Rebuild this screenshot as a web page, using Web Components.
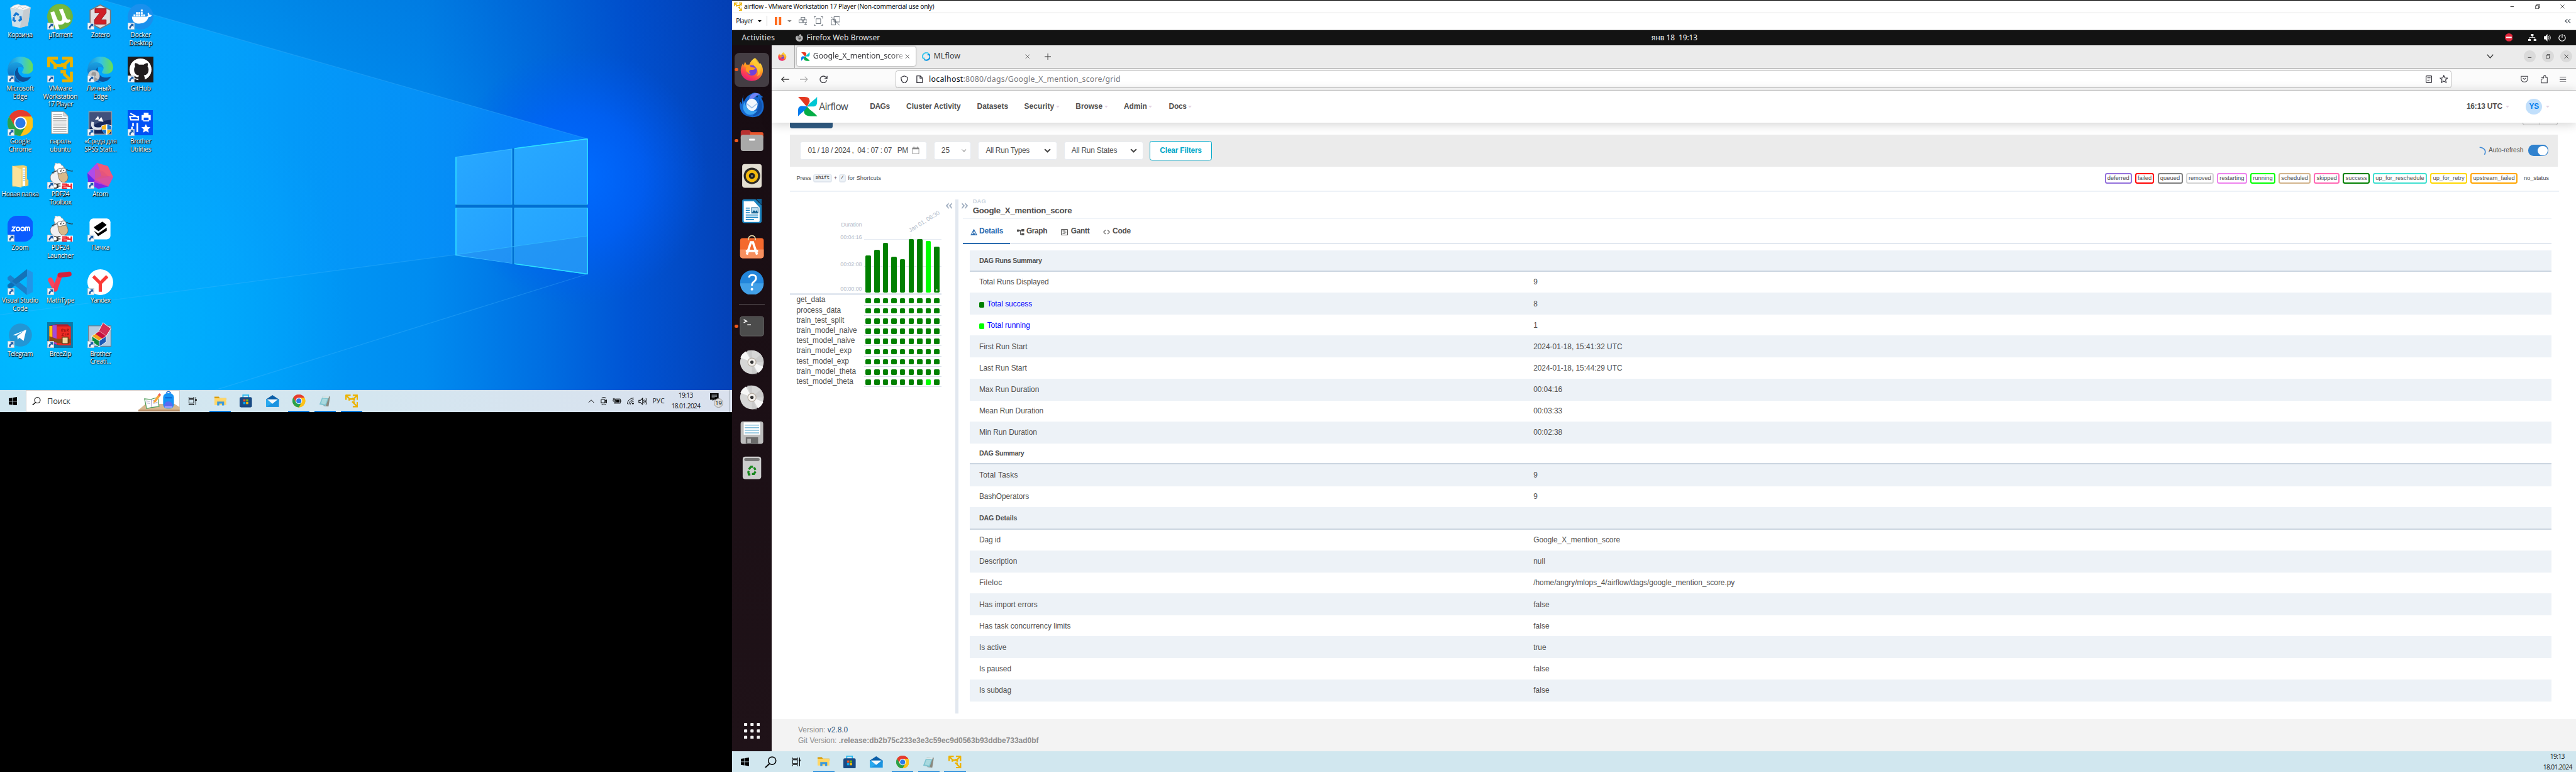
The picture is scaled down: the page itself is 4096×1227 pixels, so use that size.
<!DOCTYPE html>
<html lang="ru">
<head>
<meta charset="utf-8">
<title>Dual monitor desktop</title>
<style>
html,body{margin:0;padding:0;background:#000;overflow:hidden;width:100%;height:100%}
dual-monitor{zoom:.85227}
</style>
</head>
<body>
<dual-monitor></dual-monitor>
<script>
const SEG='"Open Sans","Noto Sans",sans-serif', UB='"Noto Sans","Open Sans",sans-serif', ARI='"Liberation Sans",Arial,sans-serif';
const define=(name,css,html,ready)=>customElements.define(name,class extends HTMLElement{
  constructor(){super();this.attachShadow({mode:'open'});}
  connectedCallback(){
    const t=document.createElement('template');
    t.innerHTML='<style>:host{display:block;box-sizing:border-box}*{box-sizing:border-box}'+css+'</style>'+(typeof html==='function'?html(this):html);
    this.shadowRoot.replaceChildren(t.content.cloneNode(true));
    if(ready)ready(this);
  }
});

/* one-line text that spreads its letters over a given width */
const ctx=document.createElement('canvas').getContext('2d');
customElements.define('ui-text',class extends HTMLElement{
  constructor(){super();this.attachShadow({mode:'open'}).innerHTML='<style>:host{display:block;flex:none;white-space:pre;line-height:1.2}</style><slot></slot>';}
  connectedCallback(){
    const w=+this.getAttribute('w'),t=this.textContent;
    if(!w)return;
    const c=getComputedStyle(this);
    ctx.font=c.fontWeight+' '+c.fontSize+' '+c.fontFamily;
    this.style.letterSpacing=((w-ctx.measureText(t).width)/t.length).toFixed(3)+'px';
    this.style.width=w+'px';
  }
});
const T=(t,w,size,color,bold,fam,extra)=>`<ui-text w="${w}" style="font-family:${(fam||ARI).replace(/"/g,"'")};font-size:${size}px;color:${color||'#51504f'};font-weight:${bold||400};${extra||''}">${t}</ui-text>`;
/* a flex strip: [left, width, content] turned into margins */
const strip=(start,items)=>{let p=start;return items.map(([x,w,h,s])=>{const m=x-p;p=x+w;return `<div style="flex:none;display:flex;align-items:center;margin-left:${m}px;width:${w}px;${s||''}">${h}</div>`;}).join('');};

const svg=(vb,body)=>`<svg viewBox="${vb}" width="100%" height="100%" preserveAspectRatio="none" style="display:block" xmlns="http://www.w3.org/2000/svg">${body}</svg>`;
const edge=`<defs><linearGradient id="ea" x1="0" y1="0" x2="1" y2="0"><stop offset="0" stop-color="#1b8fd6"/><stop offset=".5" stop-color="#33c3e8"/><stop offset="1" stop-color="#6ae04e"/></linearGradient><linearGradient id="eb" x1="0" y1="0" x2="0" y2="1"><stop offset="0" stop-color="#1ba0e0"/><stop offset="1" stop-color="#0a5cb4"/></linearGradient></defs><path d="M0 24C1 9 12 0 24 0c14 0 24 9 24 20 0 9-7 12-12 12-6 0-9-1-9-3s3-3 3-8c0-5-6-10-14-10C8 11 1 17 0 24z" fill="url(#ea)"/><path d="M0 24c2-8 9-13 16-13 8 0 14 5 14 11-4-6-17-3-17 9 0 9 6 15 13 17C10 49 0 37 0 24z" fill="url(#eb)"/><path d="M20 20c-7 3-9 16-1 23 8 7 20 4 25-6-6 3-14 3-19-1-5-4-7-11-5-16z" fill="#0f4f96"/>`;
const vmw=`<g fill="none" stroke="#ecb200" stroke-width="5.5" stroke-linejoin="round"><path d="M2.8 20V2.8H20"/><path d="M28 2.8h17.2V20"/><path d="M45.200 28v17.200H28"/><path d="M4 4l13 13h8M44 4L30 17h-5M44 44L31 32"/></g><path d="M12 14h14v5h-8v4h-6zM26 12h10v11h-6v-4h-4zM25 25h10v10h-5v-4h-5z" fill="#ecb200"/>`;
const chrome=`<circle cx="24" cy="24" r="24" fill="#fbbc05"/><path d="M24 24L3.200 12A24 24 0 0 1 44.800 12z" fill="#ea4335"/><path d="M24 12h20.800A24 24 0 0 0 3.200 12L13.600 30z" fill="#e53c2e"/><path d="M3.200 12A24 24 0 0 0 24 48l10.400-18L24 24 13.600 30z" fill="#2ba24c"/><path d="M24 48a24 24 0 0 0 20.800-36H24l10.400 18z" fill="#fdc21a"/><circle cx="24" cy="24" r="12" fill="#fff"/><circle cx="24" cy="24" r="9.500" fill="#2a7bea"/>`;
const firefox=`<defs><linearGradient id="fa" x1=".8" y1="0" x2=".3" y2="1"><stop offset="0" stop-color="#fff34c"/><stop offset=".45" stop-color="#ff9a20"/><stop offset=".75" stop-color="#ff4150"/><stop offset="1" stop-color="#e21b7c"/></linearGradient></defs><path d="M31 0c3 7 6 9 8 12l3-1c7 9 7 21 0 29-5 6-12 8-18 8C10 48 1 38 1 26c0-6 2-11 5-15l1 5 3-8 3 6h6c2-6 6-11 12-14z" fill="url(#fa)"/><circle cx="24" cy="26" r="11" fill="#7540d8"/><path d="M7 16c7-3 13-1 15 3l10 2c-2 4-6 4-9 4-6 0-5 6-1 9C14 33 9 24 13 20z" fill="#ff9a1e"/><path d="M31 0c9 8 14 18 11 30-1 5-4 7-7 8 4-8 1-15-4-19-5-5-5-12 0-19z" fill="#ffc933" opacity=".75"/>`;
const airflow=`<path d="M0 0h12c8 0 10 4 9.500 9L17 18C12 15 8 7 0 0z" fill="#e43921"/><path d="M35.500 0v9c0 8-4 9-9 9H17C20 12 28 8 35.500 0z" fill="#00c7d4"/><path d="M36 36H24c-8 0-13-3-13-9 0-3 3-7 6-9 3 6 12 10 19 18z" fill="#04ad46"/><path d="M0 36V25c0-7 4-8 8-8l9 1c-2 6-9 10-17 18z" fill="#017cee"/>`;
const sheep=`<path d="M8 34c-5-8 0-16 5-15-1-5 3-8 6-7 0-6 8-9 12-5l5 9 2 14-6 8H14z" fill="#f0f0f2" stroke="#777" stroke-width="1"/><path d="M15 3c-3-2 2-4 4-2 3-2 8 0 7 3 4 0 6 4 2 6L16 14c-4-2-4-8-1-11z" fill="#fff" stroke="#999" stroke-width=".8"/><path d="M20 18c4-3 16-3 18 4 3 9-2 14-8 14-7 0-10-10-10-18z" fill="#d9b98a" stroke="#555" stroke-width=".8"/><circle cx="24" cy="15" r="5" fill="#fff" stroke="#444" stroke-width=".8"/><circle cx="31" cy="14" r="4.500" fill="#fff" stroke="#444" stroke-width=".8"/><circle cx="25" cy="15" r="1"/><circle cx="31" cy="14" r="1"/><path d="M36 12q6 4 12 3M18 15q-6 1-9 4" stroke="#333" stroke-width="1.300" fill="none"/><rect y="37" width="48" height="11" fill="#fff"/><path d="M13 39h3q3 0 3 4t-3 4h-3M25 39h-5v8M20 43h5" stroke="#333" stroke-width="1.800" fill="none"/><path d="M28 39.500h8V43h-7v4h8M39 39v4.500h7M45 38.500V48" stroke="#ee1c25" stroke-width="2.600" fill="none"/>`;
const disc=`<circle cx="24" cy="24" r="23" fill="#d6d6d6"/><path d="M24 24L1.500 15A24 24 0 0 1 12 3z" fill="#f6f6f6"/><path d="M24 24l22 9a24 24 0 0 1-10 12z" fill="#f6f6f6"/><path d="M24 24V1h-9zM24 24h23a23 23 0 0 0-6-15zM24 24v23h10z" fill="#c4c4c4" opacity=".7"/><circle cx="24" cy="24" r="8" fill="#f4f1ee" stroke="#b5ada2" stroke-width="1.500"/><circle cx="24" cy="24" r="3.200" fill="#333"/>`;
const ICONS={
 edge:['0 0 48 48',edge], vmware:['0 0 48 48',vmw], chrome:['0 0 48 48',chrome], firefox:['0 0 48 48',firefox], airflow:['0 0 36 36',airflow], sheep:['0 0 48 48',sheep], disc:['0 0 48 48',disc],
 edgeme:['0 0 48 48',edge+'<circle cx="12" cy="36" r="11" fill="#c9c9c9"/><circle cx="12" cy="33" r="4.500" fill="#9a9a9a"/><path d="M4 43q8-9 16 0-8 6-16 0z" fill="#9a9a9a"/>'],
 ffgray:['0 0 48 48','<path d="M31 0c3 7 6 9 8 12l3-1c7 9 7 21 0 29-5 6-12 8-18 8C10 48 1 38 1 26c0-6 2-11 5-15l1 5 3-8 3 6h6c2-6 6-11 12-14z" fill="#b8b8b8"/><circle cx="25" cy="26" r="10" fill="#555"/><path d="M7 16c7-3 13-1 15 3l10 2c-2 4-6 4-9 4-6 0-5 6-1 9C14 33 9 24 13 20z" fill="#8f8f8f"/>'],
 bin:['0 0 48 48','<path d="M5 8l38-1-5 34-15 4-14-3z" fill="#dfe3e6" opacity=".93"/><path d="M30 12l13-5-5 34-15 4z" fill="#c6ccd1"/><path d="M5 8l7-5 8-2 5 2 9 0 9 4-13 5z" fill="#f7f7f7" stroke="#c5cacd" stroke-width=".8"/><path d="M12 6l6 3 4-5 6 5 7-3" fill="none" stroke="#b9bfc4"/><g fill="none" stroke="#1677d2" stroke-width="4"><path d="M12 23l4-5 5 3M24 23l1 6-4 3M15 33l-4-3 1-5"/></g>'],
 utorrent:['0 0 48 48','<circle cx="24" cy="24" r="24" fill="#6cb33e"/><circle cx="24" cy="20" r="19" fill="#8cc63f" opacity=".35"/><path d="M6 16l7-2 6 15q3 5 8 2 2-2 1-6l-6-14 7-2 7 18q3 4 6 2l2 3q-6 6-11 2-2 5-9 5-3 0-4-1l3 9-7 1z" fill="#fff"/>'],
 zotero:['0 0 48 48','<path d="M24 2l19 10v24L24 46 5 36V12z" fill="#e0dfe0" stroke="#7d7678" stroke-width="2"/><path d="M14 9h21v8L25 30h10v8H13v-8l10-13h-9z" fill="#cf2027" stroke="#8c1217"/>'],
 docker:['0 0 48 48','<circle cx="24" cy="24" r="24" fill="#1a90ed"/><path d="M8 24h27q2 0 3-2-2-3 0-6 3 2 3 5 3-1 4 1-2 3-6 3-4 12-17 12Q8 37 8 24z" fill="#fff"/><g fill="#fff"><path d="M11 20h3.500v3.500H11zM15.500 20H19v3.500h-3.500zM20 20h3.500v3.500H20zM24.500 20H28v3.500h-3.500zM29 20h3.500v3.500H29zM15.500 15.500H19V19h-3.500zM20 15.500h3.500V19H20zM24.500 15.500H28V19h-3.500zM24.500 11H28v3.500h-3.500z"/></g>'],
 github:['0 0 48 48','<path fill="#201c1d" d="M0 0h48v48H0z"/><circle cx="24" cy="24" r="20.500" fill="#fff"/><path d="M20 48v-7c-6 1-8-3-10-5 4-1 5 3 10 2l1-3c-6-1-9-4-9-11 0-2 1-4 2-6-1-2-1-4 0-6 3 0 5 1 7 3h9c2-2 4-3 7-3 1 2 1 4 0 6 1 2 2 4 2 6 0 7-3 10-9 11 1 2 2 3 2 6v7z" fill="#201c1d"/>'],
 txt:['0 0 48 48','<path d="M8 3h23l8 8v33H8z" fill="#fbfbfb" stroke="#909090"/><path d="M31 3v8h8z" fill="#d8d8d8" stroke="#909090"/><path d="M11 8h17M11 12h17M11 16h25M11 20h25M11 24h25M11 28h25M11 32h25M11 36h25M11 40h25" stroke="#8a8a8a" stroke-width="1.200"/>'],
 spss:['0 0 48 48','<path d="M3 3h42v42H3z" fill="#17285c" stroke="#8e98a8" stroke-width="2"/><path d="M4 4h40v14Q20 20 4 34z" fill="#5c6b8f" opacity=".6"/><path d="M10 22Q6 38 26 34" fill="none" stroke="#dfe4ee" stroke-width="5"/><path d="M14 18l6-7 2 7zM20 20l6-7 4 9z" fill="#fff"/><path d="M26 29l10-3 10 3q1 12-10 17-11-5-10-17z" fill="#fff"/><path d="M27 30l8-3v9h-8zM37 37h8q-2 5-8 8z" fill="#f9b81c"/><path d="M37 27l8 3v6h-8zM27 37h8v8q-6-3-8-8z" fill="#1678d3"/>'],
 brother:['0 0 48 48','<path fill="#0052f5" d="M0 0h47v47H0z"/><g fill="none" stroke="#fff" stroke-width="2.500"><path d="M4 12h16v6H6zM5 6l15 8"/><path d="M10 24v6M8 31v11M18 24v9M18 33v8" stroke-width="3"/></g><path d="M30 5h9v4h4v10h-3v2H29v-2h-3V9h4zM34 26l2.500 5.500 6 .5-4.500 4 1.500 6-5.500-3-5.500 3 1.500-6-4.500-4 6-.5z" fill="#fff"/><path d="M30 14h9v5h-9z" fill="#0052f5"/>'],
 folder:['0 0 48 48','<path d="M9 6l20-2 6 2v36l-6 2H9z" fill="#f2cf6a"/><path d="M28 9h8v34h-8z" fill="#fff"/><path d="M29 13h6M29 17h6M29 21h6M29 25h6M29 29h6M29 33h6" stroke="#4b9fd8"/><path d="M9 5l17 7v34L9 42z" fill="#fbe29a"/><path d="M36 6v24l3 2v10l-6 2V8z" fill="#eec75c"/>'],
 atom:['0 0 48 48','<path d="M18 0l20 6 10 20-9 18-19 4L2 38 0 19z" fill="#c33bd0"/><path d="M18 0l20 6 10 20-22-2z" fill="#ee5b78"/><path d="M18 0L0 19l14 12 12-7z" fill="#b04bea"/><path d="M14 31l12-7 22 2-9 18z" fill="#d8519f"/><path d="M0 19l14 17 25 8-19 4L2 38z" fill="#7a2be6"/><path d="M0 19l14 14-12 5z" fill="#5b2bf0"/><path d="M14 10l16 6 10 10-26 5z" fill="#e0517f" opacity=".6"/>'],
 zoom:['0 0 48 48','<rect width="48" height="48" rx="17" fill="#0b5cff"/><g fill="none" stroke="#fff" stroke-width="2"><path d="M8 21h6l-6 7h6"/><circle cx="19.500" cy="24.500" r="3.200"/><circle cx="28" cy="24.500" r="3.200"/><path d="M33 28.500V23q0-2 2-2t2 2v5.500M37 23q0-2 2-2t2 2v5.500"/></g>'],
 pachka:['0 0 48 48','<rect x="4" y="5" width="39" height="39" rx="7" fill="#fff"/><path d="M12 21l16-10 8 6-15 12q-7-3-9-8zM12 28l8 5 16-11v6L20 38z" fill="#000"/><path d="M13 24l8 6 14-11" fill="none" stroke="#fff" stroke-width="1.500"/>'],
 vscode:['0 0 48 48','<path d="M36 0l12 6v36l-12 6z" fill="#2196e8"/><path d="M36 0v13L5 37l-5-4v-4z" fill="#0a6fb8"/><path d="M36 48V35L5 11l-5 4v4z" fill="#1a80cc"/><path d="M36 0v13l-20 15-8-6z" fill="#1472b8"/>'],
 mathtype:['0 0 48 48','<g fill="none" stroke-linecap="round" stroke-width="9"><path d="M6 20l9 17" stroke="#f9475e"/><path d="M15 37l9-26" stroke="#f23e53"/><path d="M24 11l17-2" stroke="#d4203c"/></g>'],
 yandex:['0 0 48 48','<circle cx="24" cy="24" r="24" fill="#fff"/><path d="M11 13l13 13 13-13M24 26v16" stroke="#fb3a36" stroke-width="6" fill="none"/>'],
 telegram:['0 0 48 48','<circle cx="24" cy="24" r="21.500" fill="#2396d4"/><path d="M10 24l25-10-5 21-8-6-3 4-1-7 13-10-16 9z" fill="#fff"/>'],
 breezip:['0 0 48 48','<path fill="#0b78a8" d="M0 0h48v48H0z"/><path d="M4 7l12-3h22l6 5v34H22L4 38z" fill="#b31c2c"/><path d="M4 7h6v31l-6-2z" fill="#ffc20e"/><path d="M10 6h8v36l-8-3z" fill="#a24bd8"/><path d="M18 8h26v35H22l-4-2z" fill="#ee2b24"/><path d="M4 26l14 5h26v8H20L4 35z" fill="#8a4a16"/><path d="M28 28h11v12H28z" fill="#f2d9a0" stroke="#5b3310" stroke-width="1.500"/><path d="M27 18v-5h3v2h-3l3 3M32 18l1-5 2 5M37 18v-5h3v2h-3l3 3M27 21h4l-4 4h4M34 21v4M37 25v-4h3v2h-3" stroke="#8e1010" fill="none"/>'],
 creative:['0 0 48 48','<path d="M2 7h42v38H2z" fill="#b4cbe0" stroke="#6a7f92" stroke-width="1.500"/><path d="M29 1l15 11-9 14-14-9z" fill="#d22f56" stroke="#fff"/><path d="M8 26l14-9 13 9-14 9z" fill="#f6a31c" stroke="#fff"/><path d="M22 17l13 9-7 5-13-9z" fill="#c8103e"/><path d="M8 26l14 9v11L9 37z" fill="#0a8a3d" stroke="#fff"/><path d="M22 35l13-9v11L22 46z" fill="#1b5bb8" stroke="#fff"/>'],
 arrow:['0 0 13 13','<path d="M.5.500h12v12H.5z" fill="#f2f5f8" stroke="#bcc6cf"/><path d="M5 2h6v6L9 6Q5 8 6 11H3Q2 6 7 4z" fill="#2160a8"/>'],
 start:['0 0 16 16','<path d="M0 2.300L6.500 1.400V7.500H0zM7.500 1.200L16 0v7.500H7.500zM0 8.500h6.500v6.100L0 13.700zM7.500 8.500H16V16l-8.500-1.200z"/>'],
 search:['0 0 16 16','<circle cx="10" cy="6" r="5.200" fill="none" stroke="currentColor" stroke-width="1.300"/><path d="M6.500 10L.5 15.500" stroke="currentColor" stroke-width="1.600"/>'],
 taskview:['0 0 16 16','<path d="M.5 0v2.500h9V0M.5 16v-2.500h9V16M.5 4.500h9v7h-9zM13.500 0v16" fill="none" stroke="#000" stroke-width="1.200"/><path d="M12 4h3v3h-3z"/>'],
 wfolder:['0 0 22 22','<path d="M0 2h8l2 3h12v4H0z" fill="#d99a00"/><path d="M0 5h22v14H0z" fill="#ffd667"/><path d="M5 20v-8h13v8h-4v-4H9v4z" fill="#3b99dc"/>'],
 store:['0 0 22 24','<path d="M6 7V1h10v6" fill="none" stroke="#20b7ef" stroke-width="2"/><rect y="5" width="22" height="19" rx="2.500" fill="#184a84"/><path d="M6.500 9h4v4h-4z" fill="#f35325"/><path d="M11.500 9h4v4h-4z" fill="#81bc06"/><path d="M6.500 14h4v4h-4z" fill="#05a6f0"/><path d="M11.500 14h4v4h-4z" fill="#ffba08"/>'],
 mail:['0 0 24 22','<path d="M12 0l12 8v4H0V8z" fill="#0b5fa8"/><path d="M0 8h24v14H0z" fill="#2aa9ee"/><path d="M24 8v14H0z" fill="#1b93e0"/><path d="M2 8h20l-10 8z" fill="#f4f8fb"/>'],
 notepad:['0 0 24 24','<path d="M8 2l13 1-3 20-9-1z" fill="#8a8a80"/><path d="M7 2l12 1-6 19L1 19z" fill="#7fc4d0"/><path d="M7 2l12 1-1 3L6 5z" fill="#dfe8ea"/><path d="M7 7l9 1-4 11-8-2z" fill="#b9e2e6" opacity=".7"/>'],
 desk:['0 0 80 40','<path d="M0 38L14 26h56l10 6v8H0z" fill="#d7b78f"/><path d="M0 37h80v3H0z" fill="#b98f68"/><path d="M12 16l12 1 14-4 2 18-14 2-10 2z" fill="#fff" stroke="#4c9a57" stroke-width="1.500"/><path d="M25 17l1 15M15 20l7 1M15 24l8 1M28 20l8-2M29 25l8-2" stroke="#a9a3c8" stroke-width="1.500"/><path d="M30 20l9-13 4 3-9 12-5 2z" fill="#f9a63a"/><path d="M38 8l3-3 3 3-2 3z" fill="#ef5b5b"/><rect x="48" y="5" width="21" height="30" rx="8" fill="#1593f5"/><path d="M54 5q4-7 9 0" fill="none" stroke="#0d60d8" stroke-width="2"/><path d="M52 14h13" stroke="#0b55c8" stroke-width="2"/><path d="M50 31q0-10 8-10t9 10q-8 5-17 0z" fill="#5a6bf0"/><path d="M51 32h15" stroke="#c9b6ff" stroke-width="2"/>'],
 up:['0 0 14 8','<path d="M1 7l6-6 6 6" fill="none" stroke="#000" stroke-width="1.300"/>'],
 down:['0 0 14 8','<path d="M1 1l6 6 6-6" fill="none" stroke="currentColor" stroke-width="1.600"/>'],
 downb:['0 0 14 9','<path d="M1.500 1.500L7 7l5.500-5.500" fill="none" stroke="currentColor" stroke-width="2.600"/>'],
 cam:['0 0 14 16','<path d="M2 2q4-2 8 0M2 14q4 2 8 0M1 5h7v6H1zM8 7.500l3-2v5l-3-2" fill="none" stroke="#000" stroke-width="1.200"/>'],
 batt:['0 0 16 12','<path d="M5 2.500h9.500v8H5zM1.500 1v3M4 1v3M1 4.500h4v2q-2 2-4 0zM3 8v2.500h2" fill="none" stroke="#000"/><path d="M6.500 4h6.500v5H6.500z"/><path d="M15 5h1v3h-1z"/>'],
 wifi:['0 0 13 13','<path d="M.5 12A11.500 11.500 0 0 1 12.500.8M3.500 12.500A9 9 0 0 1 12.500 4M6.500 12.500A6 6 0 0 1 12.500 7" fill="none" stroke="#000" stroke-width="1.100"/><circle cx="11" cy="11" r="1.600"/>'],
 snd:['0 0 17 14','<path d="M1 5h3l4-4v12l-4-4H1z" fill="none" stroke="#000" stroke-width="1.200"/><path d="M10 4.500q2 2.500 0 5M12 3q3 4 0 8M14 1q4.500 6 0 12" fill="none" stroke="#000" stroke-width="1.100"/>'],
 note:['0 0 16 15','<path d="M0 0h16v12H7l-2 3v-3H0z"/><path d="M3 3.500h10M3 6h10M3 8.500h6" stroke="#dbe3ee"/>'],
 tri:['0 0 8 5','<path d="M0 0h8L4 5z" fill="currentColor"/>'],
 pause:['0 0 12 16','<path d="M0 0h4.500v16H0zM7.500 0H12v16H7.500z" fill="#ff6a1b"/>'],
 cad:['0 0 16 16','<path d="M4.500.500h7v5h-7zM.5 5.500h7v5h-7zM8.500 5.500h7v5h-7zM13 10v5M10.500 13l2.500 2.500 2.500-2.500" fill="none" stroke="#4c5660"/>'],
 full:['0 0 18 18','<path d="M.5 4V.5H4M14 .5h3.500V4M17.500 14v3.500H14M4 17.500H.5V14M4.500 4.500h9v9h-9z" fill="none" stroke="#4c5660"/>'],
 unity:['0 0 17 17','<path d="M6 .5h10.500v10H6zM1 6h8v10H1zM1 1l15.500 16" fill="none" stroke="#4c5660"/>'],
 min:['0 0 10 10','<path d="M1 5h8" stroke="currentColor" stroke-width="1.200"/>'],
 minlow:['0 0 10 10','<path d="M1 8h8" stroke="currentColor" stroke-width="1.200"/>'],
 rest:['0 0 10 10','<path d="M1 2.500h6.500v6.500H1zM3 2.500v-2h6.500v6.500h-2" fill="none" stroke="currentColor"/>'],
 x:['0 0 10 10','<path d="M.8.800l8.400 8.400M9.200.800L.8 9.200" stroke="currentColor" stroke-width="1.100"/>'],
 plus:['0 0 12 12','<path d="M6 0v12M0 6h12" stroke="currentColor" stroke-width="1.300"/>'],
 dleft:['0 0 14 8','<path d="M6.500.500L2 4l4.500 3.500M12 .5L7.500 4 12 7.500" fill="none" stroke="#3c4650" stroke-width="1.200"/>'],
 dnd:['0 0 16 16','<circle cx="8" cy="8" r="8" fill="#e2263b"/><path d="M2.500 6.800h11v2.600h-11z" fill="#fff"/>'],
 net:['0 0 16 14','<path d="M5.500 0h5v4h-5zM0 10h5v4H0zM11 10h5v4h-5z" fill="#fff"/><path d="M8 4v3M2.500 10V7h11v3" fill="none" stroke="#fff"/>'],
 vol:['0 0 15 14','<path d="M0 4h3l4-4v14l-4-4H0z" fill="#fff"/><path d="M9 4q2 3 0 6M11 2q4 5 0 10" fill="none" stroke="#ddd" stroke-width="1.200"/>'],
 power:['0 0 14 14','<path d="M4 2a6 6 0 1 0 6 0M7 0v7" fill="none" stroke="#fff" stroke-width="1.400"/>'],
 mlflow:['0 0 16 16','<path d="M8 1a7 7 0 0 0-6 10.500M2 11.500l-1-4M2 12l3.500-1" stroke="#43c9ed" stroke-width="2.400" fill="none"/><path d="M8 15a7 7 0 0 0 6-10.500M14 4.500l1 4M14 4l-3.500 1M4 13.500q2 1.500 4 1.500" stroke="#0194e2" stroke-width="2.400" fill="none"/><path d="M8 1q3 0 5 2" stroke="#43c9ed" stroke-width="2.400" fill="none"/>'],
 back:['0 0 15 12','<path d="M15 6H1M6 1L1 6l5 5" fill="none" stroke="currentColor" stroke-width="1.500"/>'],
 fwd:['0 0 15 12','<path d="M0 6h14M9 1l5 5-5 5" fill="none" stroke="currentColor" stroke-width="1.300"/>'],
 reload:['0 0 15 15','<path d="M13.500 8.500a6.200 6.200 0 1 1-1.500-5.300L14 5.500M14.200 1v4.700H9.500" fill="none" stroke="#3a3a40" stroke-width="1.500"/>'],
 shield:['0 0 14 15','<path d="M7 .8l6 2.500c.3 5-1 9-6 11-5-2-6.300-6-6-11z" fill="none" stroke="#2b2a33" stroke-width="1.400"/>'],
 page:['0 0 12 14','<path d="M1 .7h6.500L11.300 4.500v8.800H1zM7 1v4h4" fill="none" stroke="#2b2a33" stroke-width="1.400"/>'],
 reader:['0 0 12 14','<rect x=".7" y=".7" width="10.600" height="12.600" rx="1.500" fill="none" stroke="#2b2a33" stroke-width="1.400"/><path d="M3 4h6M3 6.500h6M3 9h4" stroke="#2b2a33"/>'],
 star:['0 0 16 16','<path d="M8 1l2 4.500 5 .5-3.700 3.300 1.100 5L8 11.700l-4.400 2.600 1.100-5L1 6l5-.5z" fill="none" stroke="#2b2a33" stroke-width="1.300"/>'],
 pocket:['0 0 15 14','<path d="M1 1.500h13V6q0 7-6.500 7T1 6zM4.500 5l3 3 3-3" fill="none" stroke="#3a3a40" stroke-width="1.300"/>'],
 ext:['0 0 14 16','<path d="M1 8h2q2 0 2-1.500T3.500 5H1M1 8v7h12V5h-3V3q0-2-2-2T6 3v2H3.500" fill="none" stroke="#3a3a40" stroke-width="1.300"/>'],
 menu:['0 0 13 11','<path d="M0 .7h13M0 5.500h13M0 10.300h13" stroke="#3a3a40" stroke-width="1.300"/>'],
 cal:['0 0 14 14','<path d="M1 2.500h12v11H1z" fill="none" stroke="#888"/><path d="M1 2h12v3H1zM3 0h1.500v3H3zM9.500 0H11v3H9.500z" fill="#888"/>'],
 spin:['0 0 16 16','<path d="M2 1.500q6 0 9.500 4.500 2.500 4-.5 9" fill="none" stroke="#3e8ad6" stroke-width="1.900"/>'],
 cl:['0 0 13 12','<path d="M6.500 0L1 6l5.500 6V9L4 6l2.500-3zM12.500 0L7 6l5.500 6V9L10 6l2.500-3z" fill="#a0aec0"/>'],
 cr:['0 0 13 12','<path d="M.5 0L6 6 .5 12V9L3 6 .5 3zM6.500 0L12 6l-5.500 6V9L9 6 6.500 3z" fill="#a0aec0"/>'],
 details:['0 0 13 12','<path d="M6.500 1L12 11.300H1zM6.500 1v10M3 11l3.500-3L10 11" fill="none" stroke="#2b6cb0" stroke-width="1.300"/>'],
 graph:['0 0 15 12','<path d="M0 1h5v4H0zM9 0h5.500v4.500H9zM9 7.500h5.500V12H9z" fill="#51504f"/><path d="M5 3h4M7 3v7h2" fill="none" stroke="#51504f" stroke-width="1.300"/>'],
 gantt:['0 0 13 12','<rect x=".7" y=".7" width="11.600" height="10.600" rx="1" fill="none" stroke="#51504f" stroke-width="1.300"/><path d="M3 3.500h5M5 6h5M3 8.500h5" stroke="#51504f" stroke-width="1.200"/>'],
 code:['0 0 14 9','<path d="M5 .8L1 4.500 5 8.200M9 .8l4 3.700L9 8.200" fill="none" stroke="#51504f" stroke-width="1.300"/>'],
 tbird:['0 0 48 48','<path d="M9 5Q5 10 8 18 14 6 22 3q8-6 17 1l7 5-4 1q6 9 5 20-3 18-22 18Q1 47 0 24q0-3 2-6 1 3 3 5Q3 12 9 5z" fill="#1668cf"/><path d="M20 8Q25-1 38 2l3 2q-6-1-10 4-5 6-13 6z" fill="#7183f5"/><circle cx="34" cy="8" r="1.500" fill="#062b55"/><path d="M38 12q9 10 4 24-6 9-17 10 14-10 13-34z" fill="#1153ae"/><ellipse cx="24" cy="24" rx="11" ry="12" fill="#f1f6fd"/><path d="M13 21l11 9 11-9" fill="none" stroke="#9fc2ea" stroke-width="2"/><path d="M10 18Q2 32 14 42q12 5 21-7-14 4-21-5-3-5-4-12z" fill="#3ca4f4"/>'],
 files:['0 0 48 48','<path d="M1 8q0-4 4-4h14l4 4h21q3 0 3 3v10H1z" fill="#b83030"/><path d="M20 8h24q3 0 3 3v8H20z" fill="#e8562a"/><rect x="1" y="13" width="46" height="33" rx="5" fill="#a9a9a9"/><rect x="18" y="21" width="12" height="4" rx="1.500" fill="#fff"/>'],
 rhythm:['0 0 48 48','<rect x="5" y="1" width="38" height="46" rx="5" fill="#e4dfd3"/><circle cx="24" cy="24" r="16" fill="#2d2a26"/><circle cx="24" cy="24" r="12" fill="#f2b90f"/><circle cx="24" cy="24" r="6" fill="#222"/><circle cx="24" cy="24" r="2" fill="#777"/>'],
 writer:['0 0 48 48','<path d="M5 5q0-4 4-4h22l12 12v30q0 4-4 4H9q-4 0-4-4z" fill="#1c84c0"/><path d="M8 5h20l11 12v26q0 2-2 2H10q-2 0-2-2z" fill="#fff"/><path d="M32 0h11v12z" fill="#0f5f94"/><path d="M12 18h8M12 22.500h8M12 27h8M12 31.500h24M12 36h24M12 40.500h16" stroke="#1583c3" stroke-width="2"/><path d="M23 17h13v11H23z" fill="#bfe0f3" stroke="#0e5c8c"/><path d="M24 27l4-5 3 3 2-3 3 5z" fill="#0e5c8c"/>'],
 soft:['0 0 48 48','<rect x="1" y="8" width="46" height="39" rx="5" fill="#f4692d"/><path d="M1 30h46v12q0 5-5 5H6q-5 0-5-5z" fill="#f79060"/><path d="M17 12q0-9 7-9t7 9" fill="none" stroke="#e9d9a8" stroke-width="2"/><path d="M14 40l8-24h4l8 24M12 33h24" fill="none" stroke="#fff" stroke-width="4.500"/>'],
 help:['0 0 48 48','<circle cx="24" cy="24" r="23" fill="#2386dc"/><path d="M1 26a23 23 0 0 0 46 0z" fill="#42a0e8"/><path d="M18 15q1-5 7-5 7 0 7 6 0 4-4 7-4 2-4 8" fill="none" stroke="#fff" stroke-width="3.500"/><circle cx="24" cy="37.500" r="2.500" fill="#fff"/>'],
 term:['0 0 48 48','<rect x="1" y="5" width="46" height="38" rx="5" fill="#4c4c4c" stroke="#6b6b6b"/><path d="M8 11l6 3-6 3M15 21h7" fill="none" stroke="#fff" stroke-width="1.800"/>'],
 floppy:['0 0 48 48','<rect x="2" y="2" width="44" height="44" rx="5" fill="#bdbdbd"/><path d="M8 4h32v24H8z" fill="#fff"/><path d="M10 9.500h28M10 14.500h28M10 19.500h28M10 24.500h28" stroke="#0f7fb5"/><path d="M12 33h24v13H12z" fill="#6a6a6a"/><path d="M15 36h7v8h-7z" fill="#b5b5b5"/>'],
 trash:['0 0 48 48','<rect x="6" y="2" width="36" height="44" rx="5" fill="#cdcdcd"/><rect x="9" y="5" width="30" height="6" rx="3" fill="#777"/><g fill="none" stroke="#17881c" stroke-width="4"><path d="M18 27l4-5h4M28 23l3 5M31 31l-3 5h-4M21 37h-3l-1-5 1-2"/></g>'],
 grid9:['0 0 30 30','<g fill="#f3f1f2"><rect width="6" height="6" rx="1.500"/><rect x="12" width="6" height="6" rx="1.500"/><rect x="24" width="6" height="6" rx="1.500"/><rect y="12" width="6" height="6" rx="1.500"/><rect x="12" y="12" width="6" height="6" rx="1.500"/><rect x="24" y="12" width="6" height="6" rx="1.500"/><rect y="24" width="6" height="6" rx="1.500"/><rect x="12" y="24" width="6" height="6" rx="1.500"/><rect x="24" y="24" width="6" height="6" rx="1.500"/></g>']
};
customElements.define('ui-icon',class extends HTMLElement{
  constructor(){super();this.attachShadow({mode:'open'});}
  connectedCallback(){
    const i=ICONS[this.getAttribute('name')],w=this.getAttribute('w'),h=this.getAttribute('h')||w;
    this.shadowRoot.innerHTML=`<style>:host{display:block;flex:none;width:${w}px;height:${h}px}</style>`+svg(i[0],i[1]);
  }
});
const I=(n,w,h,c)=>`<ui-icon name="${n}" w="${w}" h="${h||w}" style="color:${c||'#000'}"></ui-icon>`;

/* ---------- left monitor ---------- */
define('desktop-shortcut',`:host{width:75px;height:99px;padding-top:7px;display:flex;flex-direction:column;align-items:center}
.pic{position:relative;width:48px;height:48px;margin-bottom:3px}.pic .ov{position:absolute;left:0;bottom:0}
ui-text{text-shadow:1px 1px 1px #000,0 1px 2px #000c;line-height:15px}`,
 el=>`<div class="pic">${I(el.getAttribute('icon'),48)}${el.hasAttribute('plain')?'':'<div class="ov">'+I('arrow',13)+'</div>'}</div>`+
 el.getAttribute('label').split('|').map(s=>{const[t,w]=s.split('~');return T(t,w,12,'#fff',400,SEG,'line-height:15px;');}).join(''));
const S=(icon,label,plain)=>icon?`<desktop-shortcut icon="${icon}" label="${label}"${plain?' plain':''}></desktop-shortcut>`:'<span></span>';
const wallpaper=svg('0 0 1366 768',`<defs>
<linearGradient id="a" x1="0" y1="0" x2="1" y2="0"><stop offset="0" stop-color="#00aaff"/><stop offset=".3" stop-color="#00a0fa"/><stop offset=".58" stop-color="#008cf0"/><stop offset=".74" stop-color="#006fe2"/><stop offset=".86" stop-color="#0054d4"/><stop offset="1" stop-color="#0442b8"/></linearGradient>
<radialGradient id="b" gradientUnits="userSpaceOnUse" cx="1080" cy="330" r="240"><stop offset="0" stop-color="#006cff"/><stop offset=".5" stop-color="#0062ff" stop-opacity=".65"/><stop offset="1" stop-color="#0058f0" stop-opacity="0"/></radialGradient>
<radialGradient id="c" gradientUnits="userSpaceOnUse" cx="100" cy="600" r="560"><stop offset="0" stop-color="#00bcff"/><stop offset="1" stop-color="#00b0ff" stop-opacity="0"/></radialGradient>
<linearGradient id="d" x1="0" y1="0" x2="1" y2="0"><stop offset="0" stop-color="#18b4ff" stop-opacity="0"/><stop offset=".5" stop-color="#0a9cff" stop-opacity=".3"/><stop offset="1" stop-color="#0a8cff" stop-opacity=".75"/></linearGradient>
<linearGradient id="e" x1="0" y1="0" x2="0" y2="1"><stop offset="0" stop-color="#0030a0" stop-opacity=".5"/><stop offset="1" stop-color="#0030a0" stop-opacity="0"/></linearGradient>
<linearGradient id="p" x1="0" y1="0" x2="1" y2="1"><stop offset="0" stop-color="#28aaff"/><stop offset="1" stop-color="#229cff"/></linearGradient></defs>
<path fill="url(#a)" d="M0 0h1366v768H0z"/><path d="M190 0h1176v330l-270-70z" fill="url(#e)" opacity=".35"/><path fill="url(#c)" d="M0 0h1366v768H0z"/><path fill="url(#b)" d="M600 0h766v768H600z"/>
<path d="M190 0L1096 259V440L850 475 0 587V0z" fill="url(#d)"/>
<path d="M190 0L1096 259M0 587L850 475M1096 511L400 728" stroke="#48bcff" stroke-opacity=".3" stroke-width="1.500" fill="none"/>
<path d="M850 381h246v7H850z M955 277h5v215h-5z" fill="#006fd2"/>
<g fill="url(#p)" stroke="#38baff" stroke-width="1.300"><path d="M850.500 293L955 278v103H850.500z"/><path d="M960 277l136-18v122H960z"/><path d="M850.500 388H955v103l-104.500-15z"/><path d="M960 388h136v123l-136-19z"/></g>
<path d="M850 475l105-15v31zM960 459l136-19v70l-136-18z" fill="#1f86e8" opacity=".45"/><path d="M850 475l246-35" stroke="#30b8ff"/>
<path d="M850.700 293v88M850.700 388v88M1096 259v122M1096 388v123M1096 259l-136 18M1096 511l-136-19" stroke="#2be0ff" stroke-width="1.700" fill="none"/>`);
define('windows-desktop',`:host{width:1366px;height:768px;display:grid}.wall,.col{grid-area:1/1}.wall{width:1366px;height:768px}.col{display:flex;flex-direction:column;justify-content:space-between;z-index:1}
.icons{display:grid;grid-template-columns:repeat(4,75px);grid-auto-rows:99px}`,
`<div class="wall">${wallpaper}</div><div class="col"><div class="icons">
${S('bin','Корзина~46',1)}${S('utorrent','µTorrent~44')}${S('zotero','Zotero~35')}${S('docker','Docker~38|Desktop~43')}
${S('edge','Microsoft~51|Edge~27')}${S('vmware','VMware~43|Workstation~64|17 Player~47')}${S('edgeme','Личный -~52|Edge~27')}${S('github','GitHub~38')}
${S('chrome','Google~38|Chrome~43')}${S('txt','пароль~39|ubuntu~39',1)}${S('spss','«Среда для~60|SPSS Stati...~60')}${S('brother','Brother~39|Utilities~39')}
${S('folder','Новая папка~69',1)}${S('sheep','PDF24~33|Toolbox~41')}${S('atom','Atom~30')}${S()}
${S('zoom','Zoom~32')}${S('sheep','PDF24~33|Launcher~49')}${S('pachka','Пачка~34')}${S()}
${S('vscode','Visual Studio~68|Code~28')}${S('mathtype','MathType~52')}${S('yandex','Yandex~37')}${S()}
${S('telegram','Telegram~47')}${S('breezip','BreeZip~40')}${S('creative','Brother~39|Creati...~39')}${S()}
</div><task-bar></task-bar></div>`);
const appBtn=(n,w,h,on)=>`<div style="width:40px;height:40px;display:flex;align-items:center;justify-content:center;border-bottom:2.400px solid ${on?'#0078d7':'transparent'};padding-top:2px">${I(n,w,h)}</div>`;
define('task-bar',`:host{width:1366px;height:40px;background:linear-gradient(90deg,#d1e7f0,#d4e6f0 50%,#dae1ee);display:flex;align-items:stretch}
.search{width:288px;height:40px;background:#fff;border:1px solid #cfcfcf;display:flex}.badge{position:relative;width:24px;height:30px}.badge b{position:absolute;left:7px;top:10px;width:18px;height:17px;border:1px solid #999;border-radius:9px;background:#ddd;display:flex;align-items:center;justify-content:center;font:500 11px ${SEG};color:#000}`,
strip(0,[[16,16,I('start',16)],[48,288,`<div class="search">${strip(49,[[60,16,I('search',16)],[88,44,T('Поиск',43,15,'#333',400,SEG)],[258,77,I('desk',77,38)]])}</div>`],
[352,16,I('taskview',16)],[391,40,appBtn('wfolder',22,20,1)],[439,40,appBtn('store',23,24)],[489,40,appBtn('mail',24,22)],[538,40,appBtn('chrome',24,24,1)],[587,40,appBtn('notepad',24,22,1)],[636,40,appBtn('vmware',24,24,1)],
[1097,12,I('up',12,7)],[1121,13,I('cam',14,16)],[1143,16,I('batt',16,12)],[1170,13,I('wifi',13)],[1191,17,I('snd',17,14)],[1218,22,T('РУС',22,12,'#111',400,SEG)],
[1253,54,`<div>${T('19:13',27,12,'#111',400,SEG,'margin:0 0 2px 13px;line-height:18px')}${T('18.01.2024',54,12,'#111',400,SEG,'line-height:18px')}</div>`],
[1325,24,`<div class="badge">${I('note',16,15)}<b>19</b></div>`],[1361,1,'<i style="width:1px;height:40px;background:#9aa4b0"></i>']]));

/* ---------- virtual machine window ---------- */
define('vm-title',`:host{height:55px;background:#fff;border-top:1px solid #000}.r{display:flex;align-items:center;height:22px}.t{height:32px;border-top:1px solid #e2e2e2;border-bottom:1px solid #dcdcdc}`,
`<div class="r">${strip(1366,[[1369,16,I('vmware',16)],[1388,355,T('airflow - VMware Workstation 17 Player (Non-commercial use only)',355,12,'#000',400,SEG)],[4683,8,I('min',8)],[4730,9,I('rest',9)],[4777,8,I('x',8)]])}</div>
<div class="r t">${strip(1366,[[1373,32,T('Player',32,12,'#000',400,SEG)],[1414,7,I('tri',7,4)],[1430,1,'<i style="width:1px;height:19px;background:#c9c9c9"></i>'],[1446,12,I('pause',12,16)],[1469,8,I('tri',8,4,'#8a8a8a')],[1490,16,I('cad',16)],[1519,17,I('full',17,18)],[1550,17,I('unity',17)],[4784,14,I('dleft',14,8)]])}</div>`);
define('gnome-bar',`:host{height:28px;background:#131313;display:flex;align-items:center}`,
strip(1366,[[1384,62,T('Activities',62,14,'#e8e8e8',400,UB)],[1484,15,I('ffgray',14,14)],[1505,137,T('Firefox Web Browser',137,14,'#e8e8e8',400,UB)],[3081,86,T('янв 18  19:13',86,14,'#f2f2f2',400,UB)],[4673,15,I('dnd',15)],[4717,15,I('net',15,13)],[4746,14,I('vol',14)],[4773,14,I('power',14)]]));
define('dock-item',`:host{width:74px;height:66px;display:flex;align-items:center;position:relative}.dot{width:6px;height:6px;border-radius:50%;margin-left:5px;background:transparent}:host([run]) .dot{background:#f0591f}.b{width:64px;height:64px;margin-left:-6px;border-radius:9px;display:flex;align-items:center;justify-content:center}:host([active]) .b{background:#443d43}.dot{z-index:1}`,
 el=>{const n=el.getAttribute('icon');return `<div class="dot"></div><div class="b">${I(n,+el.getAttribute('s')||46)}</div>`});
define('gnome-dock',`:host{width:74px;height:1317px;background:linear-gradient(#170c12,#1f1218);display:flex;flex-direction:column;padding-top:13px}.sep{width:48px;height:1px;background:#5b5458;margin:8px 0 8px 13px}.apps{margin:auto 0 23px 22px}`,
['firefox','tbird','files','rhythm','writer','soft','help'].map((n,i)=>`<dock-item icon="${n}"${i==0?' run active s="43"':i==2?' run s="44"':''}></dock-item>`).join('')+'<div class="sep"></div>'+
`<dock-item icon="term" run></dock-item><dock-item icon="disc"></dock-item><dock-item icon="disc"></dock-item><dock-item icon="floppy"></dock-item><dock-item icon="trash"></dock-item><div class="apps">${I('grid9',30)}</div>`);
define('firefox-tabs',`:host{height:44px;background:#ebebeb;border-bottom:1px solid #a3a3a3;display:flex;align-items:center}.tab{width:221px;height:36px;background:#fff;border-radius:4px;box-shadow:0 0 3px #0007;display:flex;align-items:center}.f{width:172px;flex:none;-webkit-mask:linear-gradient(90deg,#000 85%,#0003)}.c{width:22px;height:22px;border-radius:11px;background:#dadada;display:flex;align-items:center;justify-content:center}`,
strip(1440,[[1452,16,I('firefox',16)],[1482,1,'<i style="width:1px;height:43px;background:#aaa"></i>'],[1487,221,`<div class="tab">${strip(1487,[[1495,16,I('airflow',16)],[1517,170,`<div class="f">${T('Google_X_mention_score',168,14.5,'#3a3a3e',400,UB)}</div>`],[1688,9,I('x',9,9,'#555')]])}</div>`],[1720,16,I('mlflow',16)],[1742,50,T('MLflow',50,14.5,'#3a3a3e',400,UB)],[1913,9,I('x',9,9,'#555')],[1949,12,I('plus',12,12,'#444')],[4640,13,I('down',13,8,'#333')],
[4709,22,`<div class="c">${I('minlow',8,8,'#333')}</div>`],[4743,22,`<div class="c">${I('rest',9,9,'#333')}</div>`],[4777,22,`<div class="c">${I('x',9,9,'#333')}</div>`]]));
define('firefox-toolbar',`:host{height:41px;background:#fbfbfb;border-bottom:1px solid #c8c8c8;display:flex;align-items:center}.u{width:2903px;height:32px;border:1px solid #bcbcbc;border-radius:4px;background:#fff;display:flex;align-items:center}`,
strip(1440,[[1457,15,I('back',15,12,'#333')],[1493,15,I('fwd',15,12,'#aaa')],[1529,15,I('reload',15)],[1671,2903,`<div class="u">${strip(1672,[[1680,14,I('shield',14,15)],[1709,12,I('page',12,14)],[1733,64,T('localhost',64,14.5,'#111',400,UB)],[1797,294,T(':8080/dags/Google_X_mention_score/grid',294,14.5,'#7a7a80',400,UB)],[4525,12,I('reader',12,14)],[4551,16,I('star',16)]])}</div>`],[4703,15,I('pocket',14,13)],[4740,14,I('ext',13,16)],[4776,13,I('menu',12,10)]]));

/* ---------- Airflow ---------- */
const car=()=>I('tri',7,4,'#e3d2e3');
define('airflow-nav',`:host{height:60px;background:#fff;box-shadow:0 2px 20px #0003;display:flex;align-items:center;position:relative;z-index:2}.av{width:30px;height:30px;border-radius:50%;background:#c1dffb;display:flex;align-items:center;justify-content:center}`,
strip(1440,[[1489,36,I('airflow',36)],[1528,54,T('Airflow',54,18,'#51504f',400,UB)],...[['DAGs',1623,37],['Cluster Activity',1691,102],['Datasets',1823,58],['Security',1911,56],['Browse',2007,50],['Admin',2097,43],['Docs',2181,33]].flatMap(([t,x,w],i)=>[[x,w,T(t,w,14,0,700)],...(i>2?[[x+w+3,7,car()]]:[])]),
[4602,67,T('16:13 UTC',67,14,0,700)],[4675,7,car()],[4713,30,`<div class="av">${T('YS',18,14,'#017cee',700)}</div>`],[4750,7,car()]]));
const box=(x,w,h)=>[x,w,`<div style="width:${w}px;height:35px;background:#fff;border:1px solid #e6eaf0;border-radius:4px;display:flex;align-items:center">${h}</div>`];
define('airflow-filters',`:host{height:60px;margin:0 34px;background:#ebebeb;display:flex;align-items:center}.clear{width:116px;height:36px;border:1px solid #00a7c8;border-radius:4px;background:#fff;display:flex;align-items:center;padding-left:18px}.tg{width:37px;height:21px;border-radius:10px;background:#3182ce;display:flex;align-items:center;justify-content:flex-end;padding-right:1px}.tg i{width:18px;height:18px;border-radius:50%;background:#fff}`,
strip(1474,[box(1493,237,strip(1494,[[1507,188,T('01 / 18 / 2024 ,  04 : 07 : 07   PM',187,14)],[1701,14,I('cal',14,14)]])),box(1743,69,strip(1744,[[1756,16,T('25',16,14)],[1794,9,I('down',9,5,'#444')]])),
box(1825,148,strip(1826,[[1839,82,T('All Run Types',82,14)],[1948,13,I('downb',13,8,'#444')]])),box(1985,148,strip(1986,[[1999,85,T('All Run States',85,14)],[2108,13,I('downb',13,8,'#444')]])),
[2145,116,`<div class="clear">${T('Clear Filters',78,14,'#00a7c8',700)}</div>`],[4624,14,I('spin',16,16)],[4643,65,T('Auto-refresh',65,12)],[4717,37,'<div class="tg"><i></i></div>']]));
const key=(t,w)=>`<div style="width:${w}px;height:15px;background:#edf2f7;border:1px solid #e0e6ee;border-bottom-width:3px;border-radius:4px;display:flex;align-items:center;justify-content:center">${T(t,t.length*5.3,9,'#51504f',700,'"Liberation Mono",monospace')}</div>`;
define('airflow-legend',`:host{height:47px;margin:0 32px 0 34px;display:flex;align-items:flex-start;justify-content:space-between;border-bottom:2.400px solid #edf2f7}.l{display:flex;align-items:center;padding-top:14px}.r{display:flex;gap:6px;padding:12px 13px 0 0}.k{height:20px;border:2.400px solid;border-radius:4px;display:flex;align-items:center;justify-content:center}`,
`<div class="l">${strip(1474,[[1486,28,T('Press',27,11)],[1517,35,key('shift',35)],[1556,6,T('+',6,10)],[1565,13,key('/',13)],[1582,62,T('for Shortcuts',62,11)]])}</div><div class="r">`+
[['deferred',50,41,'mediumpurple'],['failed',36,26,'red'],['queued',47,37,'gray'],['removed',52,42,'lightgrey'],['restarting',56,46,'violet'],['running',47,37,'lime'],['scheduled',60,50,'tan'],['skipped',48,38,'hotpink'],['success',50,40,'green'],['up_for_reschedule',101,91,'turquoise'],['up_for_retry',69,59,'gold'],['upstream_failed',88,78,'orange'],['no_status',58,47,'transparent']].map(([t,w,tw,c])=>`<div class="k" style="width:${w}px;border-color:${c}">${T(t,tw,11)}</div>`).join('')+'</div>');

const TASKS=[['get_data',54],['process_data',83],['train_test_split',89],['train_model_naive',113],['test_model_naive',109],['train_model_exp',103],['test_model_exp',98],['train_model_theta',111],['test_model_theta',106]];
const BARS=[69,79,92,67,62,100,99,96,86];
define('dag-grid',`:host{width:308px;padding-top:14px}
.top{display:flex;justify-content:flex-end;height:12px;margin-top:6px;padding-right:6px}
.chart{display:grid;grid-template-columns:138px 144px;height:161px;width:282px;border-bottom:3.600px solid #e2e8f0}
.ax{display:flex;flex-direction:column;align-items:flex-end;padding:23px 4px 0 0}
.plot{display:grid;position:relative}.bars,.lines{grid-area:1/1}.bars{display:flex;align-items:flex-end;gap:6px;padding:0 3px 2px}.bars i{width:10px;background:green;border-radius:2px}
.lines{display:flex;flex-direction:column;padding-top:56px}.lines i{height:1.200px;background:#e6ebf2}
.date{position:absolute;left:88px;top:34px;transform:rotate(-32deg);transform-origin:0 100%}.tick{position:absolute;left:87px;top:47px;width:1px;height:9px;background:#dfe5ec}
.play{position:absolute;right:6px;bottom:4px;border-left:3px solid #fff;border-top:2.500px solid transparent;border-bottom:2.500px solid transparent}
.row{display:flex;height:19px;width:282px}.name{width:138px;padding-left:12px}.cells{width:144px;border-bottom:1px solid #dbe2ec;display:flex;gap:6px;padding:5px 3px 0}.cells i{width:10px;height:10px;border-radius:2px;background:green}i.run{background:lime!important}`,
`<div class="top">${I('cl',13,12)}</div><div class="chart"><div class="ax">${T('Duration',39,11,'#b3bdcb')}${T('00:04:16',40,10.500,'#b3bdcb',400,ARI,'margin-top:11px')}${T('00:02:08',40,10.500,'#b3bdcb',400,ARI,'margin-top:37px')}${T('00:00:00',40,10.500,'#b3bdcb',400,ARI,'margin-top:33px')}</div>
<div class="plot"><div class="lines"><i></i><i style="margin-top:49px"></i><i style="margin-top:45px"></i></div><div class="bars">${BARS.map((h,i)=>`<i style="height:${h}px"${i==7?' class="run"':''}></i>`).join('')}</div><div class="date">${T('Jan 01, 06:30',66,11,'#b3bdcb')}</div><div class="tick"></div><div class="play"></div></div></div>`+
TASKS.map(([t,w],r)=>`<div class="row"><div class="name">${T(t,w,14)}</div><div class="cells">${BARS.map((_,i)=>`<i${r==8&&i==7?' class="run"':''}></i>`).join('')}</div></div>`).join(''));

const ROWS=[['h','DAG Runs Summary',117],['Total Runs Displayed',130,'9',8],['green','Total success',84,'8',8],['lime','Total running',80,'1',8],['First Run Start',90,'2024-01-18, 15:41:32 UTC',166],['Last Run Start',89,'2024-01-18, 15:44:29 UTC',166],['Max Run Duration',112,'00:04:16',54],['Mean Run Duration',120,'00:03:33',54],['Min Run Duration',108,'00:02:38',54],['h','DAG Summary',84],['Total Tasks',73,'9',8],['BashOperators',93,'9',8],['h','DAG Details',71],['Dag id',40,'Google_X_mention_score',162],['Description',71,'null',22],['Fileloc',43,'/home/angry/mlops_4/airflow/dags/google_mention_score.py',376],['Has import errors',109,'false',30],['Has task concurrency limits',171,'false',30],['Is active',51,'true',24],['Is paused',60,'false',30],['Is subdag',60,'false',30]];
define('dag-table',`.r{display:flex;align-items:center;height:39px;padding:0 0 0 18px}.r:nth-child(odd){background:#edf2f7;height:41px}.r.h{border-bottom:2.400px solid #cbd5e0}.r:first-of-type{height:40px!important}.r.d{height:42px!important}.n{width:1034px;flex:none;display:flex;align-items:center}.n i{width:10px;height:10px;border-radius:2px;margin:4px 5px 0 0}`,
'<section>'+ROWS.map((r,k)=>{
 if(r[0]==='h')return `<div class="r h${k==12?' d':''}">${T(r[1],r[2],12.5,0,700)}</div>`;
 const st=r.length===5,[t,w,v,vw]=st?r.slice(1):r;
 return `<div class="r"><div class="n">${st?`<i style="background:${r[0]}"></i>`:''}${T(t,w,14,st?'#0000ff':0)}</div>${T(v,vw,14)}</div>`;}).join('')+'</section>');
define('dag-details',`:host{flex:1;border-left:6px solid #e2e8f0;height:959px;margin-top:14px;padding-left:9px}
.head{display:flex;height:37px;border-bottom:1px solid #edf2f7;margin-right:46px}.head .cr{margin:6px 9px 0 -3px}
.tabs{height:46px;border-bottom:2.400px solid #e2e8f0;margin-right:46px;display:flex;align-items:center;padding-top:1px}.on{width:87px;align-self:stretch;border-bottom:2.400px solid #2b6cb0;margin-bottom:-2.350px;display:flex;align-items:center}.tabs div{flex:none}
dag-table{margin:12px 46px 0 12px}`,
`<div class="head"><div class="cr">${I('cr',13,12)}</div><div>${T('DAG',25,11,'#cbd5e0',700,ARI,'margin:-2px 0 0 -1px')}${T('Google_X_mention_score',185,15.500,0,700,ARI,'margin:1px 0 0 -1px')}</div></div>
<div class="tabs"><div class="on">${strip(1797,[[1811,13,I('details',13,12),'margin-top:4px'],[1827,45,T('Details',45,14,'#2b6cb0',700)]])}</div>${strip(1884,[[1897,14,I('graph',14,12),'margin-top:4px'],[1915,39,T('Graph',39,14,0,700)],[1980,13,I('gantt',13,12),'margin-top:4px'],[1998,35,T('Gantt',35,14,0,700)],[2058,14,I('code',13,9),'margin-top:4px'],[2076,34,T('Code',34,14,0,700)]])}</div><dag-table></dag-table>`);
define('airflow-footer',`:host{height:60px;background:#f3f3f3;padding:12px 0 0 49px}div{display:flex;gap:4px;height:20px}`,
`<div>${T('Version:',51,14,'#8d8d8d')}${T('v2.8.0',38,14,'#30597f')}</div><div>${T('Git Version:',72,14,'#8d8d8d')}${T('.release:db2b75c233e3e3c59ec9d0563b93ddbe733ad0bf',373,14,'#8d8d8d',700)}</div>`);
define('airflow-page',`:host{height:1232px;background:#fff;display:flex;flex-direction:column}.cut{height:22px;display:flex;justify-content:space-between;padding:0 34px}.btn{width:80px;height:10px;background:#315d85;border-radius:0 0 4px 4px}.pg{width:66px;height:4px;border:1px solid #ccc;border-top:0;border-radius:0 0 4px 4px;display:flex;justify-content:center}.pg i{width:1px;background:#ccc}.main{flex:1;display:flex;padding-left:34px;min-height:0}`,
`<airflow-nav></airflow-nav><div class="cut"><div class="btn"></div><div class="pg"><i></i></div></div><airflow-filters></airflow-filters><airflow-legend></airflow-legend><div class="main"><dag-grid></dag-grid><dag-details></dag-details></div><airflow-footer></airflow-footer>`);
define('host-taskbar',`:host{height:40px;background:#d1e7ef;display:flex}`,
strip(1366,[[1382,16,I('start',16)],[1427,22,I('search',22)],[1478,16,I('taskview',16)],[1517,40,appBtn('wfolder',22,20,1)],[1565,40,appBtn('store',23,24)],[1615,40,appBtn('mail',24,22)],[1664,40,appBtn('chrome',24,24,1)],[1713,40,appBtn('notepad',24,22,1)],[1762,40,appBtn('vmware',24,24,1)],
[4745,54,`<div>${T('19:13',27,12,'#111',400,SEG,'margin:0 0 2px 13px;line-height:18px')}${T('18.01.2024',54,12,'#111',400,SEG,'line-height:18px')}</div>`]]));
define('vm-window',`:host{width:3440px;height:1440px}.b{display:flex}.w{width:3366px}vm-title{height:56px}`,
`<vm-title></vm-title><gnome-bar></gnome-bar><div class="b"><gnome-dock></gnome-dock><div class="w"><firefox-tabs></firefox-tabs><firefox-toolbar></firefox-toolbar><airflow-page></airflow-page></div></div><host-taskbar></host-taskbar>`);
define('dual-monitor',`:host{width:4806px;height:1440px;display:flex;align-items:flex-start;background:#000;overflow:hidden}`,'<windows-desktop></windows-desktop><vm-window></vm-window>');
</script>
</body>
</html>
